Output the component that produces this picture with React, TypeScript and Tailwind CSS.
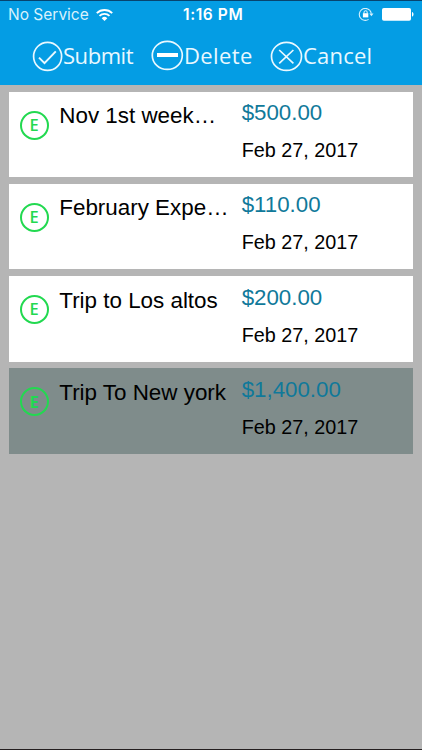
const expenses = [
  { title: 'Nov 1st week…', amount: '$500.00', date: 'Feb 27, 2017', selected: false },
  { title: 'February Expe…', amount: '$110.00', date: 'Feb 27, 2017', selected: false },
  { title: 'Trip to Los altos', amount: '$200.00', date: 'Feb 27, 2017', selected: false },
  { title: 'Trip To New york', amount: '$1,400.00', date: 'Feb 27, 2017', selected: true },
]

function StatusBar() {
  return (
    <div className="flex h-[29px] items-center border-t border-[#07446f] px-2 font-[Inter,sans-serif] text-white">
      <div className="flex w-[175px] items-center gap-[7px]">
        <span className="text-[15.5px] leading-none whitespace-nowrap text-[#d8f1fc]">No Service</span>
        <svg width="17" height="13" viewBox="0 0 17 13" fill="none" stroke="white" strokeWidth="1.9">
          <path d="M0.8 4.1a11 11 0 0 1 15.4 0" />
          <path d="M3.5 6.9a7.1 7.1 0 0 1 10 0" />
          <path d="M8.5 12L5.7 9.2a4 4 0 0 1 5.6 0z" fill="white" stroke="none" />
        </svg>
      </div>
      <span className="text-[15.5px] leading-none font-semibold tracking-[0.6px] whitespace-nowrap">1:16 PM</span>
      <div className="flex flex-1 items-center justify-end gap-[7px]">
        <svg width="16" height="14" viewBox="0 0 16 14" fill="none" stroke="#d8f1fc" strokeWidth="1.1">
          <path d="M11.6 2.2A6 6 0 1 0 10.6 11.4" />
          <path d="M11.6 2.2a6 6 0 0 1 1.7 3.4" />
          <path d="M11.3 5.6h4.2l-2.1 2.6z" fill="#d8f1fc" stroke="none" />
          <path d="M6 5.6V4.4a1.6 1.6 0 0 1 3.2 0v1.2" />
          <rect x="4.9" y="5.2" width="5.4" height="4.2" fill="white" stroke="none" />
        </svg>
        <svg width="33" height="14" viewBox="0 0 33 14" fill="white">
          <rect x="1" y="0" width="29" height="12.8" rx="1.8" />
          <path d="M31 4.1c2 0.7 2 3.9 0 4.6z" />
        </svg>
      </div>
    </div>
  )
}

function Toolbar() {
  return (
    <div className="flex h-14 items-start pl-[32px] font-['Open_Sans',sans-serif] text-[22px] leading-[30px] text-[#e9f8ff]">
      <button className="flex w-[119px] items-start">
        <svg className="mt-[12px] shrink-0" width="31" height="31" viewBox="0 0 31 31" fill="none" stroke="currentColor" strokeWidth="1.7">
          <circle cx="15.6" cy="15.4" r="14" />
          <path d="M7 16.6l5.5 5.5L23.8 10.4" strokeWidth="2" />
        </svg>
        <span className="mt-[11px] tracking-[-0.45px] whitespace-nowrap">Submit</span>
      </button>
      <button className="flex w-[119px] items-start">
        <svg className="mt-[11px] shrink-0" width="33" height="31" viewBox="0 0 33 31" fill="none" stroke="currentColor" strokeWidth="1.7">
          <ellipse cx="16.3" cy="15.4" rx="15" ry="14" />
          <path d="M6 15h21" stroke="white" strokeWidth="4" />
        </svg>
        <span className="mt-[11px] tracking-[0.4px] whitespace-nowrap">Delete</span>
      </button>
      <button className="flex items-start">
        <svg className="mt-[12px] shrink-0" width="33" height="31" viewBox="0 0 33 31" fill="none" stroke="currentColor" strokeWidth="1.7">
          <ellipse cx="16.5" cy="15.4" rx="15" ry="14" />
          <path d="M9.2 9l14.2 13.4M23.4 9L9.2 22.4" />
        </svg>
        <span className="mt-[11px] tracking-[0.2px] whitespace-nowrap">Cancel</span>
      </button>
    </div>
  )
}

function ExpenseCard({ title, amount, date, selected }: (typeof expenses)[number]) {
  return (
    <div className={`flex h-[85.4px] ${selected ? 'bg-[#7f8c8b]' : 'bg-white'}`}>
      <div className={`mt-[19px] ml-[10.4px] flex h-[29px] w-[29px] items-center justify-center rounded-full border-2 border-[#22d950] font-['Open_Sans',sans-serif] text-[16.5px] text-[#22d950] ${selected ? 'font-bold' : 'font-semibold'}`}>
        <span className="leading-none">E</span>
      </div>
      <div className="mt-[11.4px] ml-[10.6px] w-[182.4px] text-[22.4px] leading-[26px] whitespace-nowrap text-black">{title}</div>
      <div className="whitespace-nowrap">
        <div className="mt-[8.4px] text-[22.3px] leading-[26px] text-[#10799a]">{amount}</div>
        <div className="mt-[12.1px] text-[19.8px] leading-[24px] text-black">{date}</div>
      </div>
    </div>
  )
}

export default function App() {
  return (
    <div className="flex h-[750px] w-[422px] flex-col overflow-hidden bg-[#b5b5b5] font-['Liberation_Sans',Arial,sans-serif]">
      <header className="h-[85px] bg-[#049de4]">
        <StatusBar />
        <Toolbar />
      </header>
      <main className="flex flex-1 flex-col gap-[6.8px] px-[9.3px] pt-[6.8px]">
        {expenses.map((e) => (
          <ExpenseCard key={e.title} {...e} />
        ))}
      </main>
      <div className="h-px bg-[#241f20]" />
    </div>
  )
}
